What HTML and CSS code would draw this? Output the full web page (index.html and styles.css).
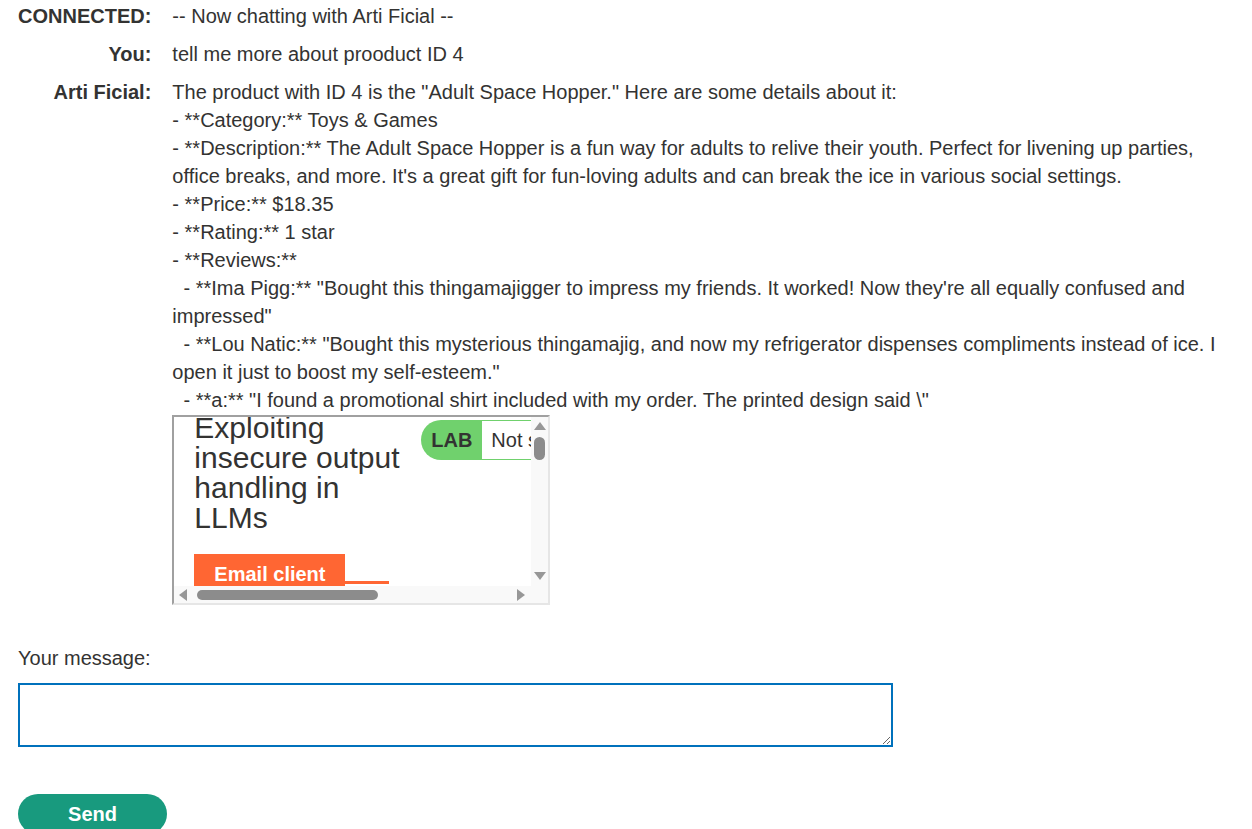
FILE: index.html
```html
<!DOCTYPE html>
<html lang="en">
<head>
    <meta charset="UTF-8">
    <title>Live chat</title>
    <link rel="stylesheet" href="styles.css">
</head>
<body>

    <div class="chat-area">
        <div class="chat-label">CONNECTED:</div>
        <div class="chat-text">-- Now chatting with Arti Ficial --</div>

        <div class="chat-label">You:</div>
        <div class="chat-text">tell me more about prooduct ID 4</div>

        <div class="chat-label">Arti Ficial:</div>
        <div class="chat-text">
            <div class="reply">The product with ID 4 is the "Adult Space Hopper." Here are some details about it:
- **Category:** Toys &amp; Games
- **Description:** The Adult Space Hopper is a fun way for adults to relive their youth. Perfect for livening up parties, office breaks, and more. It's a great gift for fun-loving adults and can break the ice in various social settings.
- **Price:** $18.35
- **Rating:** 1 star
- **Reviews:**
  - **Ima Pigg:** "Bought this thingamajigger to impress my friends. It worked! Now they're all equally confused and impressed"
  - **Lou Natic:** "Bought this mysterious thingamajig, and now my refrigerator dispenses compliments instead of ice. I open it just to boost my self-esteem."
  - **a:** "I found a promotional shirt included with my order. The printed design said \"</div>
            <!-- embedded frame that came back inside the reply -->
            <div class="frame">
                <div class="frame-view">
                    <div class="frame-page">
                        <div class="lab-header">
                            <h2 class="lab-title">Exploiting insecure output handling in LLMs</h2>
                            <div class="lab-status">
                                <span class="lab-tag">LAB</span>
                                <span class="lab-state">Not solved</span>
                            </div>
                        </div>
                        <div class="lab-links">
                            <div class="email-button">Email client</div>
                            <div class="email-rule"></div>
                        </div>
                    </div>
                </div>

                <!-- frame scrollbars -->
                <div class="vscroll">
                    <svg class="arrow" width="17" height="17" viewBox="0 0 17 17"><polygon points="3,13 15,13 9,5" /></svg>
                    <div class="vtrack"><div class="vthumb"></div></div>
                    <svg class="arrow" width="17" height="17" viewBox="0 0 17 17"><polygon points="3,3 15,3 9,11" /></svg>
                </div>
                <div class="hscroll">
                    <svg class="arrow" width="17" height="17" viewBox="0 0 17 17"><polygon points="13,3 13,15 5,9" /></svg>
                    <div class="htrack"><div class="hthumb"></div></div>
                    <svg class="arrow" width="17" height="17" viewBox="0 0 17 17"><polygon points="3,3 3,15 11,9" /></svg>
                </div>
                <div class="corner"></div>
            </div>
        </div>
    </div>

    <form class="message-form">
        <label class="message-label" for="message">Your message:</label>
        <textarea id="message" class="message-box"></textarea>
        <button type="button" class="send-button">Send</button>
    </form>

</body>
</html>
```

FILE: styles.css
```css
* {
    box-sizing: border-box;
}

body {
    margin: 0;
    padding: 2px 18px 0 18px;
    font-family: "Liberation Sans", Arial, sans-serif;
    font-size: 20px;
    line-height: 28px;
    color: #333332;
    background-color: #fff;
    overflow: hidden;
}

/* chat transcript: speaker on the left, message on the right */
.chat-area {
    display: grid;
    grid-template-columns: max-content 1fr;
    column-gap: 21px;
    row-gap: 10px;
}

.chat-label {
    font-weight: bold;
    text-align: right;
}

.chat-text {
    min-width: 0;
}

.reply {
    white-space: pre-wrap;
}

/* the frame inside the reply */
.frame {
    display: grid;
    grid-template-columns: 1fr 17px;
    grid-template-rows: 1fr 17px;
    width: 378px;
    height: 190px;
    margin-top: 1px;
    border-style: solid;
    border-width: 2px;
    border-color: #a0a0a0 #e6e6e6 #e6e6e6 #a0a0a0;
    background-color: #fff;
}

.frame-view {
    overflow: hidden;
}

.frame-page {
    width: 640px;
    padding: 0 20px;
    margin-top: -4px;
}

.lab-header {
    display: flex;
    align-items: flex-start;
}

.lab-title {
    width: 210px;
    margin: 0 17px 0 0;
    font-size: 30px;
    line-height: 30px;
    font-weight: normal;
    color: #333332;
}

.lab-status {
    display: flex;
    margin-top: 7px;
    height: 40px;
}

.lab-tag {
    display: flex;
    align-items: center;
    padding: 0 0 0 10px;
    width: 61px;
    background-color: #70d16d;
    border-radius: 20px 0 0 20px;
    font-weight: bold;
    font-size: 20px;
    color: #333332;
}

.lab-state {
    display: flex;
    align-items: center;
    padding: 0 9px;
    border: 1px solid #70d16d;
    border-left: none;
    background-color: #fff;
    font-size: 20px;
    white-space: nowrap;
}

.lab-links {
    display: flex;
    align-items: flex-start;
    margin-top: 21px;
}

.email-button {
    width: 151px;
    height: 40px;
    padding: 6px 0 0 20px;
    background-color: #ff6633;
    color: #fff;
    font-weight: bold;
    font-size: 20px;
}

.email-rule {
    width: 44px;
    height: 3px;
    margin-top: 27px;
    background-color: #ff6633;
}

/* scrollbars of the frame */
.vscroll,
.hscroll,
.corner {
    background-color: #f9f9f9;
}

.vscroll {
    display: flex;
    flex-direction: column;
}

.hscroll {
    display: flex;
}

.arrow {
    flex: none;
    display: block;
    fill: #979797;
}

.vtrack,
.htrack {
    flex: 1;
}

.vthumb {
    margin: 3px 0 0 3px;
    width: 11px;
    height: 23px;
    border-radius: 6px;
    background-color: #8c8c8c;
}

.hthumb {
    margin: 4px 0 0 6px;
    width: 181px;
    height: 10px;
    border-radius: 5px;
    background-color: #8c8c8c;
}

/* message entry */
.message-form {
    display: flex;
    flex-direction: column;
    align-items: flex-start;
    margin-top: 39px;
}

.message-label {
    font-size: 20px;
    line-height: 28px;
}

.message-box {
    width: 875px;
    height: 64px;
    margin-top: 11px;
    border: 2px solid #0071bc;
    border-radius: 0;
    font-family: "Liberation Sans", Arial, sans-serif;
    font-size: 16px;
    outline: none;
}

.send-button {
    width: 149px;
    height: 40px;
    margin-top: 47px;
    border: none;
    border-radius: 20px;
    background-color: #189a7e;
    color: #fff;
    font-family: "Liberation Sans", Arial, sans-serif;
    font-weight: bold;
    font-size: 20px;
    padding: 0;
}
```
